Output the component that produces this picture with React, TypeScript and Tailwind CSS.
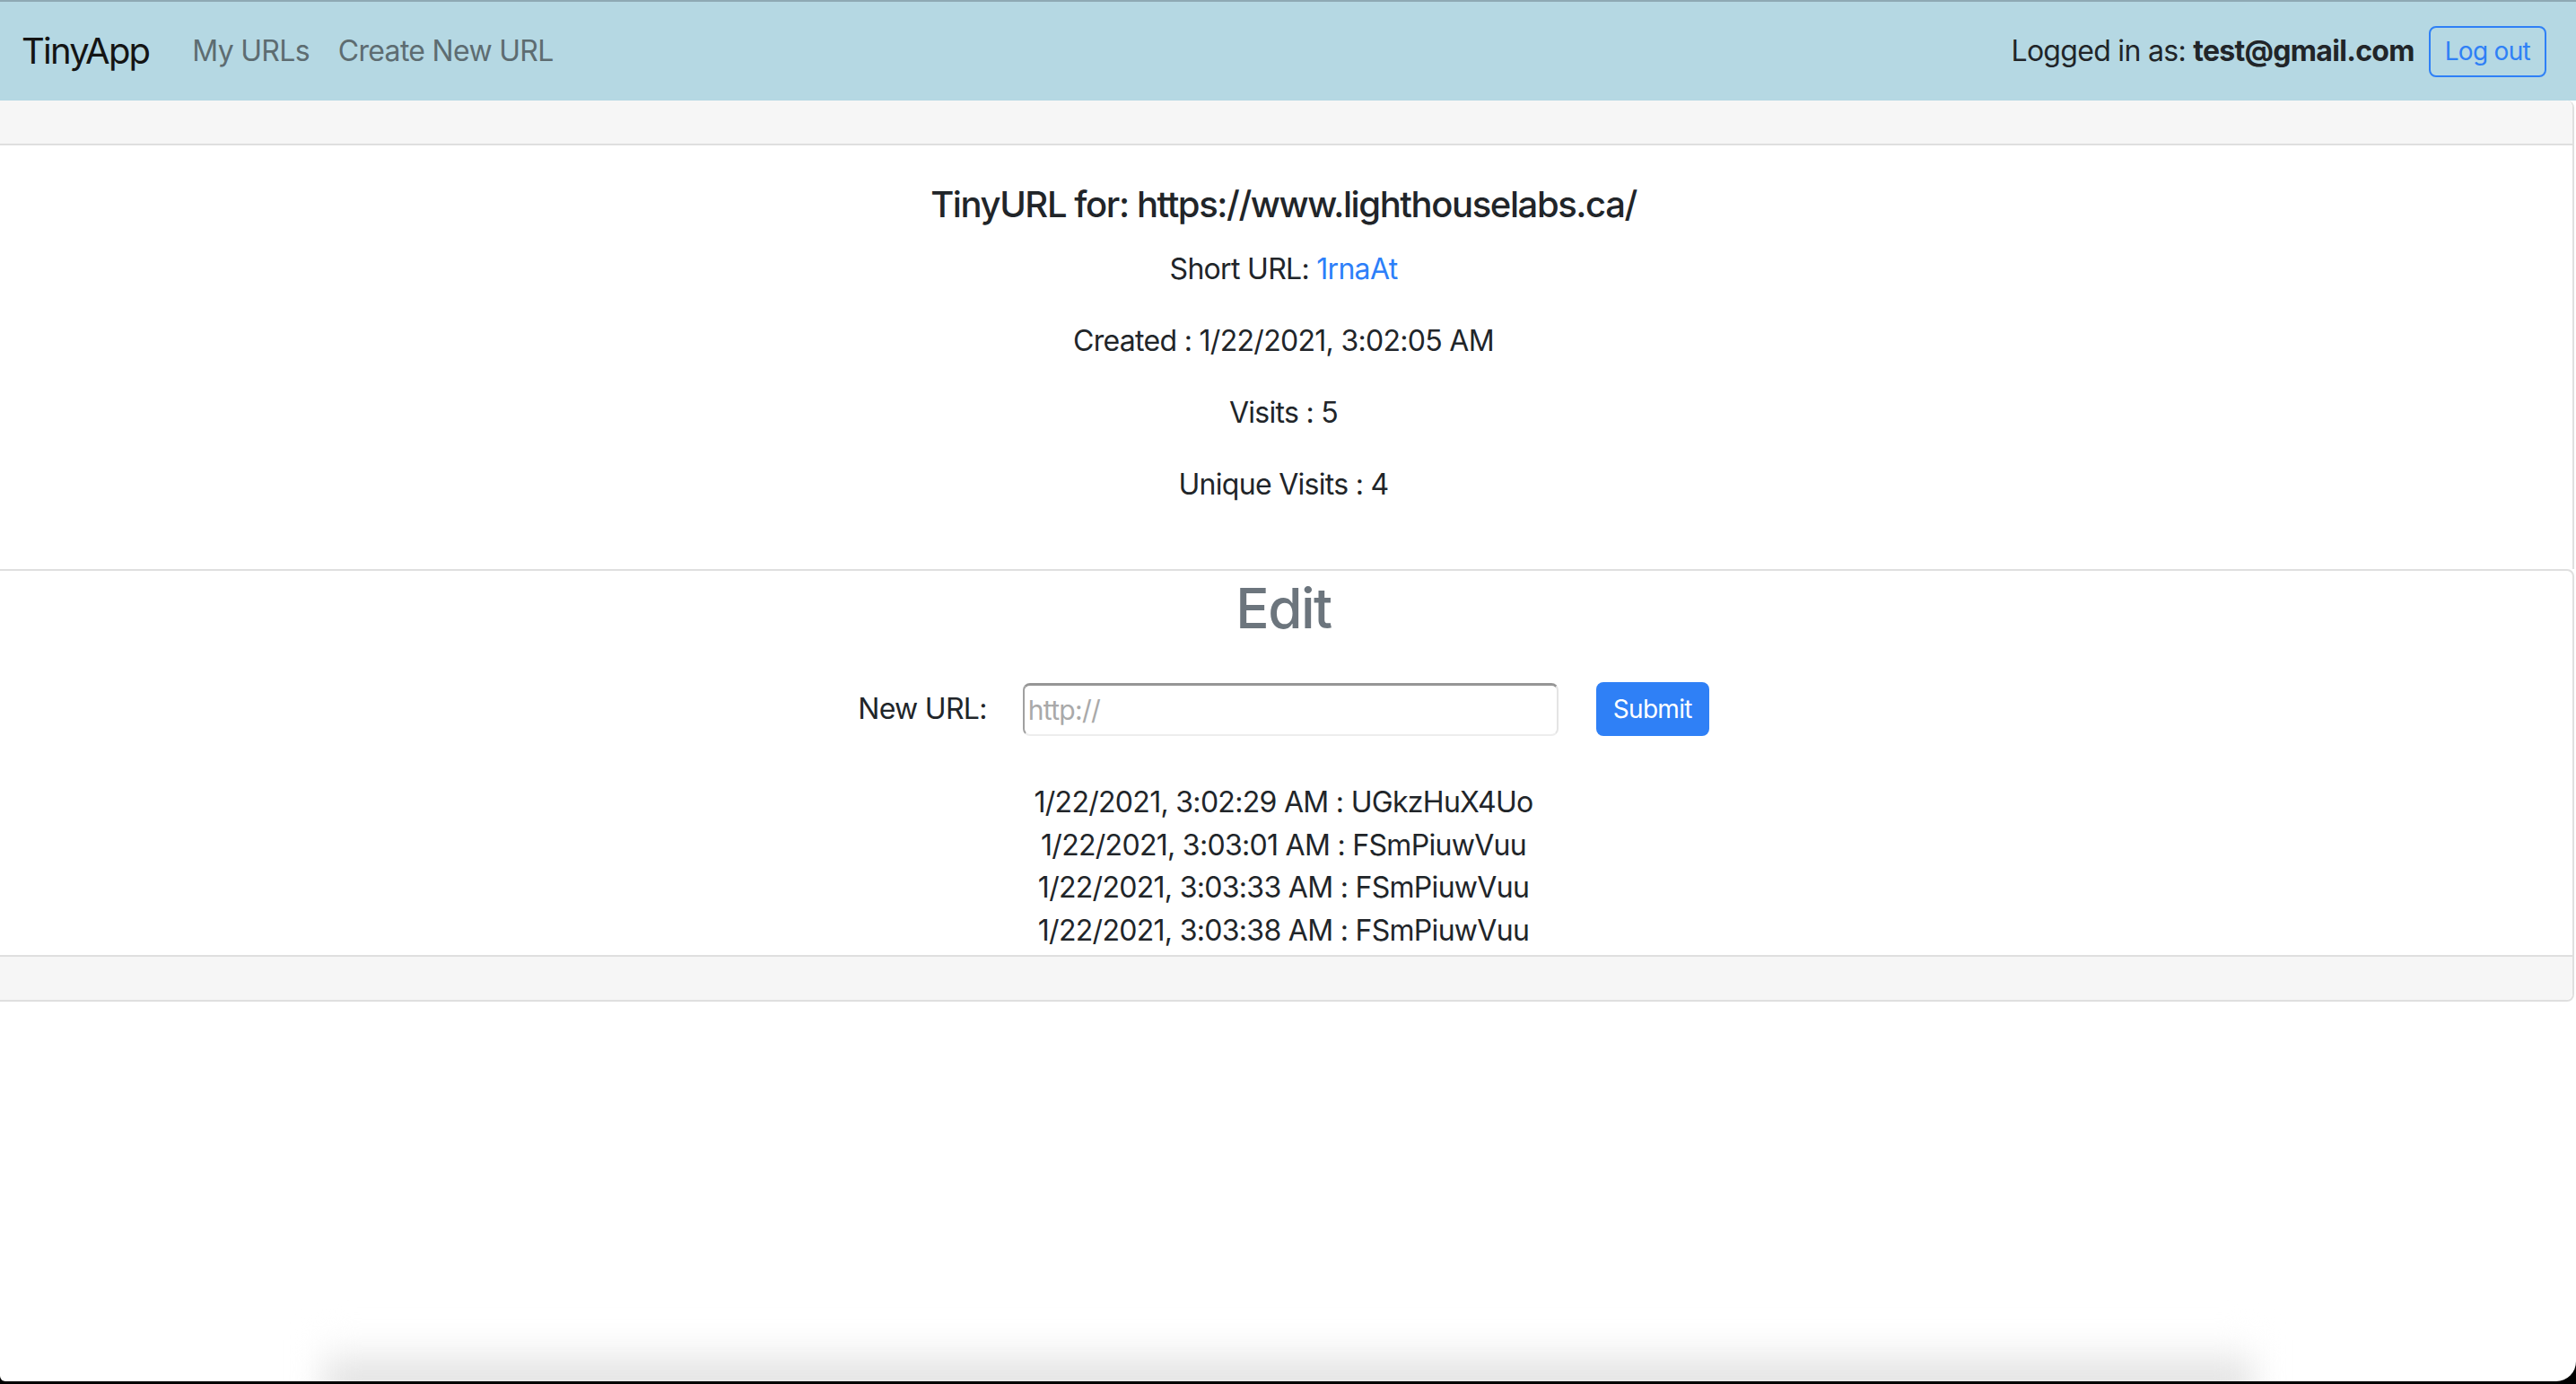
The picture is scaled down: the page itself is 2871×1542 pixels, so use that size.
import React from 'react';

const visits = [
  { time: '1/22/2021, 3:02:29 AM', visitor: 'UGkzHuX4Uo' },
  { time: '1/22/2021, 3:03:01 AM', visitor: 'FSmPiuwVuu' },
  { time: '1/22/2021, 3:03:33 AM', visitor: 'FSmPiuwVuu' },
  { time: '1/22/2021, 3:03:38 AM', visitor: 'FSmPiuwVuu' },
];

const App: React.FC = () => {
  const [newUrl, setNewUrl] = React.useState('');

  return (
    <div className="h-screen bg-black overflow-hidden font-['Inter',sans-serif] text-[#212529] tracking-[-0.7px]">
      <div className="h-[1539px] bg-white rounded-br-[22px] rounded-bl-[6px] overflow-hidden flex flex-col">
        {/* Navbar */}
        <nav className="h-[112px] shrink-0 bg-[#b5d8e3] border-t-2 border-[#8ea9b4] flex items-center justify-between pl-[24px] pr-[33px]">
          <div className="flex items-center">
            <span className="text-[40px] leading-[48px] text-[#141414] tracking-[-1.8px] mr-[32px]">TinyApp</span>
            <a className="text-[32px] leading-[48px] text-[#5d6c71] px-[16px]" href="#">My URLs</a>
            <a className="text-[32px] leading-[48px] text-[#5d6c71] px-[16px]" href="#">Create New URL</a>
          </div>
          <div className="flex items-center gap-[16px]">
            <span className="text-[32px] leading-[48px] text-[#212529]">
              Logged in as: <b className="font-bold">test@gmail.com</b>
            </span>
            <button className="h-[57px] px-[16px] text-[28px] leading-[40px] text-[#2f80f6] border-2 border-[#2f80f6] rounded-[8px]">
              Log out
            </button>
          </div>
        </nav>

        <div className="-ml-2 w-[calc(100%+6px)] flex flex-col">
          {/* URL details card */}
          <div className="border-2 border-b-0 border-[#dfdfdf] rounded-tr-[8px] border-t-0">
            <div className="h-[50px] bg-[#f6f6f6] border-b-2 border-[#dfdfdf] rounded-tr-[8px]" />
            <div className="pt-[42px] pb-[38px] px-[40px] text-center">
              <h5 className="text-[40px] leading-[48px] font-medium tracking-[-1.4px] mb-[24px]">
                TinyURL for: https://www.lighthouselabs.ca/
              </h5>
              <p className="text-[32px] leading-[48px] mb-[32px]">
                Short URL: <a href="#" className="text-[#2d7ff9]">1rnaAt</a>
              </p>
              <p className="text-[32px] leading-[48px] mb-[32px]">Created : 1/22/2021, 3:02:05 AM</p>
              <p className="text-[32px] leading-[48px] mb-[32px]">Visits : 5</p>
              <p className="text-[32px] leading-[48px] mb-[32px]">Unique Visits : 4</p>
            </div>
          </div>

          {/* Edit card */}
          <div className="border-2 border-[#dfdfdf] rounded-tr-[8px] rounded-br-[8px]">
            <div className="text-center pb-[4px]">
              <h2 className="text-[62px] leading-[76px] font-medium text-[#6c757d] tracking-[-1.5px] mt-[4px]">Edit</h2>
              <form
                className="flex items-center justify-center mt-[44px]"
                onSubmit={(e) => e.preventDefault()}
              >
                <label className="text-[32px] leading-[48px] mr-[40px]">New URL:</label>
                <input
                  value={newUrl}
                  onChange={(e) => setNewUrl(e.target.value)}
                  placeholder="http://"
                  className="w-[597px] h-[59px] px-[4px] text-[30px] text-[#212529] placeholder:text-[#a9a9a9] rounded-[8px] border-2 border-t-[3px] border-t-[#969696] border-l-[#a0a0a0] border-r-[#e4e4e4] border-b-[#ededed] outline-none"
                />
                <button
                  type="submit"
                  className="ml-[42px] w-[126px] h-[60px] text-[28px] text-white bg-[#2f80f6] rounded-[8px]"
                >
                  Submit
                </button>
              </form>
              <ul className="mt-[50px]">
                {visits.map((v) => (
                  <li key={v.time} className="text-[32px] leading-[47.5px]">
                    {v.time} : {v.visitor}
                  </li>
                ))}
              </ul>
            </div>
            <div className="h-[50px] bg-[#f6f6f6] border-t-2 border-[#dfdfdf] rounded-br-[8px]" />
          </div>
        </div>

        <div className="flex-1" />
        {/* window shadow at the bottom of the capture */}
        <div className="h-[80px] shrink-0 px-[360px] flex items-end">
          <div className="w-full h-[64px] bg-linear-to-b from-white to-[#d4d4d4] blur-[18px] translate-y-[18px]" />
        </div>
      </div>
    </div>
  );
};

export default App;
